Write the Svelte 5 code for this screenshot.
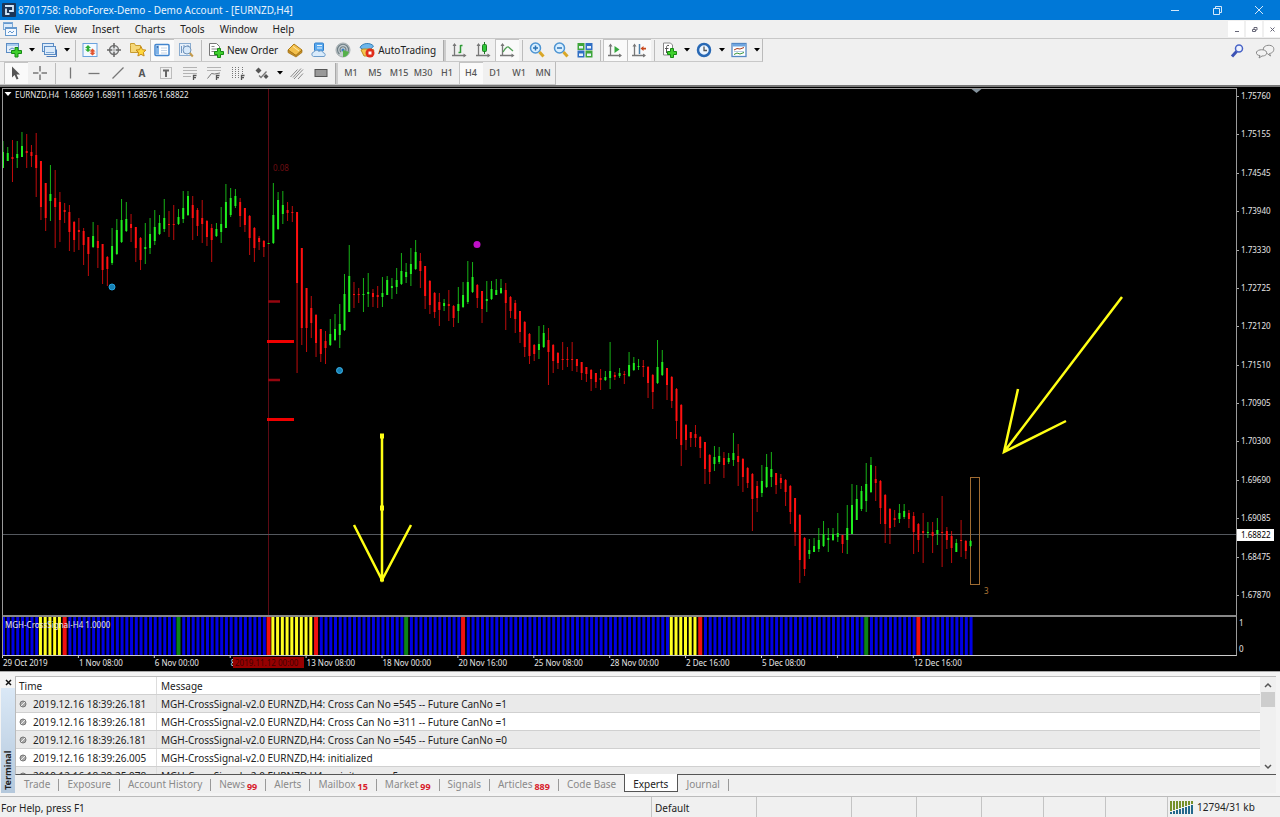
<script>
    const menus = ['File', 'View', 'Insert', 'Charts', 'Tools', 'Window', 'Help'];

    const icons = {
        newChart: '<rect x=".5" y="1.500" width="12" height="9" fill="#e4effa" stroke="#5b8cc4"/><rect x="1" y="2" width="11" height="2" fill="#a9cbee"/><path d="M3 8l3-2 2 1" fill="none" stroke="#5b8cc4"/><path d="M9 5.500h3v3h3.500v3H12v3.500H9v-3.500H5.500v-3H9z" fill="#3fd02c" stroke="#168a14"/>',
        profiles: '<rect x="1.500" y="1.500" width="11" height="8" fill="#dcebfa" stroke="#5b8cc4"/><rect x="3.500" y="4.500" width="11" height="8" fill="#dcebfa" stroke="#5b8cc4"/><path d="M5.500 14.500h10v-7" fill="none" stroke="#4a79b8"/><path d="M5 10.500h8" stroke="#7fa9d8"/>',
        market: '<rect x="1" y="1.500" width="14" height="13" fill="#f3f9ff" stroke="#6aa2de"/><path d="M6 3l3 3H7.200v1.500H9L6 10 3 7.500h1.800V6H3z" fill="#2fae35"/><path d="M10.500 6.500l3 3h-1.800v1.300h1.800l-3 2.700-3-2.700h1.800V9.500H7.500z" fill="#e2532d"/>',
        navigator: '<circle cx="8" cy="8" r="4.500" fill="#e6e8ea" stroke="#777" stroke-width="1.500"/><path d="M8 1v5M8 10v5M1 8h5M10 8h5" stroke="#666" stroke-width="1.500"/><path d="M6 8h4M8 6v4" stroke="#aaa"/>',
        favorites: '<path d="M.5 3.500v-2h4l1 2h5v7H.5z" fill="#f5d778" stroke="#c89c30"/><path d="M11 4.500l1.500 3.200 3.400.4-2.500 2.400.7 3.500-3.100-1.700-3.100 1.700.7-3.500L6 8.100l3.500-.4z" fill="#ffd83c" stroke="#c58a18"/>',
        dataWindow: '<rect x="1" y="2.500" width="14" height="11" rx="1" fill="#fff" stroke="#4386cf" stroke-width="1.500"/><rect x="2" y="3.500" width="3" height="9" fill="#7fb3e8"/><path d="M7 6h6M7 8.500h6M7 11h6" stroke="#c4d4e6"/><circle cx="3.500" cy="5" r=".8" fill="#1e4f93"/>',
        tester: '<rect x="1.500" y="1.500" width="11" height="12" fill="#e6eff9" stroke="#8aacd0"/><path d="M3.500 4v7M6 3v8M10 3v3" stroke="#6f95c2"/><circle cx="9" cy="8" r="4" fill="#d5e8fa" fill-opacity=".9" stroke="#7194ba"/><path d="M11.800 11l3 3.500" stroke="#c49a4a" stroke-width="2"/>',
        newOrder: '<path d="M1.500 1.500h7l3 3v9h-10z" fill="#fff" stroke="#777"/><path d="M3.500 4.500h3M3.500 7h6M3.500 9.500h4" stroke="#888"/><path d="M9.500 6.500h3v3h3v3h-3v3h-3v-3h-3v-3h3z" fill="#3fd02c" stroke="#168a14"/>',
        book: '<path d="M1 8l6-6 8 6-6 5.500z" fill="#f3c04c" stroke="#b07c18"/><path d="M1 8v2.500l8 4.500 6-4.500V8l-6 5.500z" fill="#c98f22" stroke="#9b6d14" stroke-width=".7"/><path d="M6 4.500l6 4.500" stroke="#ffe9a8"/>',
        hosting: '<rect x="3.500" y="1" width="9" height="8" rx="1" fill="#5aa9ee" stroke="#3180cc"/><path d="M6 3.500h5M6 6h5" stroke="#e6f4ff"/><path d="M2.500 14.500a2.300 2.300 0 0 1 .4-4.500 3 3 0 0 1 5-.6 3 3 0 0 1 4.600 1.600 1.800 1.800 0 0 1 .5 3.500z" fill="#d9ebfb" stroke="#6d9cca"/>',
        signals: '<circle cx="8" cy="8" r="7" fill="#c5cdd0" stroke="#a5adb0"/><path d="M4.500 12a5.500 5.500 0 1 1 7 0M6 10a3 3 0 1 1 4 0" fill="none" stroke="#6f7f86" stroke-width="1.200"/><circle cx="8" cy="8" r="1.600" fill="#3b7fc0"/><path d="M8 8v7c3 0 5-2 6-5z" fill="#55b04a"/>',
        auto: '<path d="M1 5.500C3 1 11 0 14.500 4l-3 3.500H4z" fill="#6db7ec" stroke="#377fb8"/><path d="M2 8l2-1h8l3 1-3 6H5z" fill="#f4c64e" stroke="#bd8b1c"/><circle cx="11" cy="11" r="4.500" fill="#e02d1b"/><rect x="9.500" y="9.500" width="3" height="3" fill="#fff"/>',
        bars: '<path d="M3.500 2v12M1 13.500h13" stroke="#777" stroke-width="1.300"/><path d="M3.500 1l2 3h-4zM15.500 13.500l-3-2v4z" fill="#777"/><path d="M9.500 3v8M9.500 3.500h2M7.500 10.500h2" stroke="#2e9a35" stroke-width="1.500"/>',
        candles: '<path d="M3.500 2v12M1 13.500h13" stroke="#777" stroke-width="1.300"/><path d="M3.500 1l2 3h-4zM15.500 13.500l-3-2v4z" fill="#777"/><path d="M9.500 0v12" stroke="#1e7a24"/><rect x="7.500" y="2.500" width="4" height="7" rx="1" fill="#2fc738" stroke="#1e7a24"/>',
        line: '<path d="M3.500 2v12M1 13.500h13" stroke="#777" stroke-width="1.300"/><path d="M3.500 1l2 3h-4zM15.500 13.500l-3-2v4z" fill="#777"/><path d="M4 10c3-5 5-6 6-4.500L14 9" fill="none" stroke="#4f9f54" stroke-width="1.300"/>',
        zoomIn: '<circle cx="6.500" cy="6" r="5" fill="#d9efff" stroke="#4d94d2" stroke-width="1.500"/><path d="M4 6h5M6.500 3.500v5" stroke="#2a72b4" stroke-width="1.500"/><path d="M10.500 10l4 4.500" stroke="#d9a728" stroke-width="3"/>',
        zoomOut: '<circle cx="6.500" cy="6" r="5" fill="#d9efff" stroke="#4d94d2" stroke-width="1.500"/><path d="M4 6h5" stroke="#2a72b4" stroke-width="1.500"/><path d="M10.500 10l4 4.500" stroke="#d9a728" stroke-width="3"/>',
        tile: '<rect x=".5" y="1" width="7" height="7" fill="#3fa53a"/><rect x="8.500" y="1" width="7" height="7" fill="#2f6fc4"/><rect x=".5" y="8.500" width="7" height="7" fill="#2f6fc4"/><rect x="8.500" y="8.500" width="7" height="7" fill="#3fa53a"/><path d="M2 4h4v2.500H2zM10 4h4v2.500h-4zM2 11.500h4V14H2zM10 11.500h4V14h-4z" fill="#e8f2fb"/>',
        autoScroll: '<path d="M3.500 3v11M1 13.500h13" stroke="#777" stroke-width="1.300"/><path d="M3.500 1.500l2 3h-4zM15 13.500l-3-2v4z" fill="#777"/><path d="M7.500 4l5 3.500-5 3.500z" fill="#35a83d"/>',
        shift: '<path d="M3.500 3v11M1 13.500h13" stroke="#777" stroke-width="1.300"/><path d="M3.500 1.500l2 3h-4zM15 13.500l-3-2v4z" fill="#777"/><path d="M8.500 2v10" stroke="#4b7fa8" stroke-width="1.500"/><path d="M9.500 6.500l3-2.500v1.800h2.500v1.600h-2.500V9z" fill="#c8471c"/>',
        indicators: '<path d="M2.500 1h7l2 2v10h-9z" fill="#fff" stroke="#888"/><path d="M8 3.500c-2-.5-2.500.5-2.500 2V11M4 6.500h3.500" fill="none" stroke="#555"/><path d="M9.500 6.500h3v3h3v3h-3v3h-3v-3h-3v-3h3z" fill="#3fd02c" stroke="#168a14"/>',
        periods: '<circle cx="8" cy="8" r="6" fill="#edf6ff" stroke="#2868b4" stroke-width="2.500"/><path d="M8 4.500V8.500h3" fill="none" stroke="#555" stroke-width="1.300"/>',
        templates: '<rect x="1" y="1.500" width="14" height="13" fill="#fff" stroke="#5488c4" stroke-width="1.300"/><rect x="1.500" y="2" width="13" height="2.500" fill="#6fa6e0"/><path d="M3 8l3-1.500 3 .5 4-1.500" fill="none" stroke="#a83a1a"/><path d="M3 9.500h10" stroke="#b8cde4"/><path d="M3 12.500l3-1.500 3 1 4-1.500" fill="none" stroke="#35943a"/>',
        cursor: '<path d="M4 1.500v11l2.600-2.400 2 4.400 1.900-.8-2-4.300H12z" fill="#555"/>',
        cross: '<path d="M8 1v5.500M8 9.500V15M1 8h5.500M9.500 8H15" stroke="#777" stroke-width="1.500"/>',
        vline: '<path d="M8.500 2.500v11" stroke="#777" stroke-width="1.300"/>',
        hline: '<path d="M2.500 8.500h11" stroke="#777" stroke-width="1.300"/>',
        trend: '<path d="M2.500 13.500l11-11" stroke="#777" stroke-width="1.300"/>',
        label: '<rect x="2.500" y="2.500" width="11" height="11" fill="none" stroke="#888" stroke-dasharray="1 1"/><path d="M5 5.500h6M8 5.500V12" stroke="#666" stroke-width="2"/>',
        fibo: '<path d="M1.500 2.500h13M1.500 5.500h13M1.500 8.500h13M1.500 11.500h8" stroke="#777" stroke-dasharray="1 1"/><path d="M11.500 15v-4.500h3M11.500 12.700h2.500" fill="none" stroke="#555" stroke-width="1.300"/>',
        fan: '<path d="M1.500 2.500h13M1.500 5.500h13" stroke="#777" stroke-dasharray="1 1"/><path d="M1.500 13.500l4-5 3 .5 5.500-1" fill="none" stroke="#777"/><path d="M10.500 15v-4.500h3M10.500 12.700h2.500" fill="none" stroke="#555" stroke-width="1.300"/>',
        zones: '<path d="M2.500 2v12M5.500 2v12M8.500 2v12M12.500 2v7" stroke="#777" stroke-dasharray="1 1"/><path d="M11.500 15v-4.500h3M11.500 12.700h2.500" fill="none" stroke="#555" stroke-width="1.300"/>',
        arrows: '<path d="M4.500 2.500L7.500 5.500l-3 3-3-3z" fill="#555"/><path d="M5 10.500l2 2 5.500-6" fill="none" stroke="#777" stroke-width="1.300"/><path d="M12 9l2.500 2.500L12 14l-2.500-2.500z" fill="#555"/>',
        channel: '<path d="M1.500 12l7-7.500M5 14l9-9.500M9 14l5-5.500M4 12.500l8-9" stroke="#888"/>',
        shape: '<rect x="2" y="4.500" width="12" height="7" fill="#999" stroke="#555"/>',
        search: '<circle cx="10" cy="5.500" r="3.500" fill="#eef3ff" stroke="#4863c6" stroke-width="1.500"/><path d="M7.500 8.500l-4.500 5" stroke="#3b52b4" stroke-width="3"/>',
    };

    const mainBar = [
        {icon: 'newChart', name: 'New chart', drop: true}, {icon: 'profiles', name: 'Profiles', drop: true}, {sep: true},
        {icon: 'market', name: 'Market Watch'}, {icon: 'navigator', name: 'Data Window'}, {icon: 'favorites', name: 'Navigator'},
        {icon: 'dataWindow', name: 'Terminal', on: true}, {icon: 'tester', name: 'Strategy Tester'}, {sep: true},
        {icon: 'newOrder', name: 'New Order', text: true}, {icon: 'book', name: 'MetaEditor'}, {icon: 'hosting', name: 'Virtual Hosting'},
        {icon: 'signals', name: 'Signals'}, {icon: 'auto', name: 'AutoTrading', text: true}, {grip: true},
        {icon: 'bars', name: 'Bar Chart'}, {icon: 'candles', name: 'Candlesticks'}, {icon: 'line', name: 'Line Chart', on: true}, {sep: true},
        {icon: 'zoomIn', name: 'Zoom In'}, {icon: 'zoomOut', name: 'Zoom Out'}, {icon: 'tile', name: 'Tile Windows'}, {sep: true},
        {icon: 'autoScroll', name: 'Auto Scroll', on: true}, {icon: 'shift', name: 'Chart Shift', on: true}, {sep: true},
        {icon: 'indicators', name: 'Indicators', drop: true}, {icon: 'periods', name: 'Periods', drop: true}, {icon: 'templates', name: 'Templates', drop: true},
    ];

    const drawBar = [
        {icon: 'cursor', name: 'Cursor', on: true}, {icon: 'cross', name: 'Crosshair'}, {sep: true},
        {icon: 'vline', name: 'Vertical Line'}, {icon: 'hline', name: 'Horizontal Line'}, {icon: 'trend', name: 'Trendline'},
        {letter: 'A', name: 'Text'}, {icon: 'label', name: 'Text Label'}, {icon: 'fibo', name: 'Fibonacci Retracement'},
        {icon: 'fan', name: 'Fibonacci Fan'}, {icon: 'zones', name: 'Fibonacci Time Zones'}, {icon: 'arrows', name: 'Arrows', drop: true},
        {icon: 'channel', name: 'Channel'}, {icon: 'shape', name: 'Rectangle'},
    ];

    const frames = ['M1', 'M5', 'M15', 'M30', 'H1', 'H4', 'D1', 'W1', 'MN'];
    let frame = $state('H4');

    // direction high bodyTop bodyBottom low
    const candles = `g141 152 168 168|g147 153 161 161|r140 157 159 182|g141 154 158 168|g132 146 157 157|r134 151 153 168|r145 152 156 167|r133 155 168 197
|r161 161 207 220|r183 183 218 231|g165 194 201 221|r170 198 207 248|r192 202 220 242|r203 210 212 223|r205 212 232 251|r221 222 240 252
|r218 230 232 250|r228 231 245 265|r237 237 254 276|g222 236 247 248|r225 241 248 268|r244 244 270 284|r256 257 269 286|g228 246 263 265
|g219 230 254 255|g199 220 242 243|g202 219 231 232|r214 224 228 242|r227 227 248 262|r237 238 260 270|g223 247 249 264|g218 234 248 254
|g210 227 241 245|g215 223 234 235|g199 218 229 232|r211 224 225 237|r205 224 225 240|g209 217 224 225|g191 208 219 223|g191 196 215 216
|r196 205 218 240|r208 210 226 236|r200 218 224 243|r220 221 237 246|r224 228 240 262|g223 229 236 237|g207 224 232 243|g184 202 228 228
|g188 198 215 217|g189 196 206 208|r198 202 216 227|r208 208 225 232|r215 216 238 255|r227 228 248 262|r236 238 242 250|r240 241 247 257
|g243 243 244 244|g183 215 243 244|g192 200 229 230|g191 205 214 224|r202 210 213 221|r206 212 213 222|r212 212 283 373|r248 248 328 345
|r288 288 328 352|r296 308 323 338|r314 315 343 357|r329 329 354 362|r331 341 348 364|g319 334 345 346|g314 329 340 341|g304 324 335 348
|g274 294 330 331|g245 276 312 312|r282 294 295 308|r288 294 295 303|g278 294 295 312|g273 292 294 307|r289 293 297 307|r286 295 297 308
|g277 293 297 307|g276 280 295 295|g278 286 288 299|g268 280 287 294|g253 271 284 285|g263 272 277 283|g248 264 274 286|g240 252 269 270
|r253 261 271 288|r266 266 296 309|r280 281 305 314|r292 293 312 318|r293 302 310 326|g299 303 306 311|r290 304 306 321|r305 306 318 327
|g287 304 311 323|g282 295 307 308|g261 282 302 304|g262 277 292 293|r284 285 298 308|r291 291 309 323|g281 299 301 312|g281 289 299 300
|g279 290 295 295|g279 288 293 294|r283 290 303 330|r296 297 311 318|r300 303 319 333|r311 311 332 343|r321 322 347 357|r333 334 356 364
|r344 345 354 361|g326 344 350 359|g325 333 347 348|r328 340 352 385|r344 345 361 373|r352 353 363 369|r342 359 360 370|r347 359 360 367
|r342 359 360 371|r359 359 366 372|r362 362 373 380|r367 367 374 382|r369 370 379 391|r373 373 382 388|r369 378 380 390|g371 377 380 381
|g342 371 378 389|r372 375 377 380|g368 373 376 378|r371 374 375 384|g352 365 376 377|g357 363 370 371|g359 366 367 370|r360 366 367 377
|r366 367 383 398|r374 375 392 409|g340 367 383 384|g350 362 375 376|r368 368 385 400|r376 377 401 408|r388 389 421 439|r404 405 445 466
|r424 425 440 450|r432 432 438 447|r425 434 438 447|r436 437 448 458|r442 442 469 484|r454 455 472 484|g446 457 464 471|g447 456 462 464
|r452 458 465 478|g453 458 462 464|g433 453 460 466|r444 456 462 486|r458 459 477 492|r467 468 483 488|r473 474 499 531|r481 486 498 512
|g465 481 493 497|g454 467 487 488|g452 469 477 487|r473 473 485 494|r474 478 483 489|r479 480 492 506|r485 486 512 524|r498 498 532 546
|r514 515 560 583|r537 538 569 576|g539 550 554 559|g538 546 552 552|g528 540 549 552|g521 534 546 547|g528 538 540 552|g528 534 540 541
|g513 533 537 542|r535 535 544 553|g505 528 540 554|g484 505 534 534|g485 499 520 520|g486 491 509 511|g463 484 501 512|g457 465 492 493
|r466 479 483 501|r480 481 508 524|r494 495 524 543|r508 509 528 544|r510 518 520 527|g504 513 519 523|g504 511 517 519|r510 513 519 528
|r512 516 532 554|r523 524 540 552|r513 531 533 563|g522 532 533 538|r522 532 536 553|g518 530 534 545|r496 532 532 567|r527 531 540 549
|r531 536 548 563|g539 543 552 552|r520 540 541 557|r540 541 551 559|g540 541 546 547`.split('|').map((row, i) => {
        const [high, top, bottom, low] = row.trim().slice(1).split(' ').map(Number);
        return {x: barX(i), up: row[0] === 'g', high, top, bottom: Math.max(bottom, top + 1), low};
    });

    function barX(i) {
        return 3 + i * 4.743;
    }

    const yellowRuns = [[8, 12], [57, 65], [141, 146]];
    const redBars = [13, 56, 66, 97, 147, 193];
    const greenBars = [37, 85, 182];

    function signal(i) {
        if (redBars.includes(i)) return 'red';
        if (greenBars.includes(i)) return 'green';
        if (yellowRuns.some(([from, to]) => i >= from && i <= to)) return 'yellow';
        return 'blue';
    }

    const prices = ['1.75760', '1.75155', '1.74545', '1.73940', '1.73330', '1.72725', '1.72120', '1.71510', '1.70905', '1.70300', '1.69690', '1.69085', '1.68475', '1.67870'];
    const dates = ['29 Oct 2019', '1 Nov 08:00', '6 Nov 00:00', '8', '13 Nov 08:00', '18 Nov 00:00', '20 Nov 16:00', '25 Nov 08:00', '28 Nov 00:00', '2 Dec 16:00', '5 Dec 08:00', '', '12 Dec 16:00'];

    const log = [
        ['2019.12.16 18:39:26.181', 'MGH-CrossSignal-v2.0 EURNZD,H4: Cross Can No =545 -- Future CanNo =1'],
        ['2019.12.16 18:39:26.181', 'MGH-CrossSignal-v2.0 EURNZD,H4: Cross Can No =311 -- Future CanNo =1'],
        ['2019.12.16 18:39:26.181', 'MGH-CrossSignal-v2.0 EURNZD,H4: Cross Can No =545 -- Future CanNo =0'],
        ['2019.12.16 18:39:26.005', 'MGH-CrossSignal-v2.0 EURNZD,H4: initialized'],
        ['2019.12.16 18:39:25.978', 'MGH-CrossSignal-v2.0 EURNZD,H4: uninit reason 5'],
    ];

    const tabs = [
        ['Trade'], ['Exposure'], ['Account History'], ['News', 99], ['Alerts'], ['Mailbox', 15], ['Market', 99],
        ['Signals'], ['Articles', 889], ['Code Base'], ['Experts'], ['Journal'],
    ];
    let tab = $state('Experts');
</script>

{#snippet bar(items)}
    {#each items as item}
        {#if item.sep}
            <span class="sep"></span>
        {:else if item.grip}
            <span class="grip"></span>
        {:else}
            <button class="tool" class:on={item.on} class:wide={item.text} aria-label={item.name}>
                {#if item.letter}
                    <b>{item.letter}</b>
                {:else}
                    <svg width="16" height="16" viewBox="0 0 16 16">{@html icons[item.icon]}</svg>
                {/if}
                {#if item.text}<span>{item.name}</span>{/if}
            </button>
            {#if item.drop}
                <button class="drop" aria-label="{item.name} options">
                    <svg width="6" height="4" viewBox="0 0 6 4"><path d="M0 0h6L3 3.500z" /></svg>
                </button>
            {/if}
        {/if}
    {/each}
{/snippet}

<div class="window">
    <header class="title">
        <svg width="14" height="14" viewBox="0 0 14 14">
            <rect width="14" height="14" rx="1" fill="#1c3557" />
            <path d="M3 3h8v5H7M4 5.500V11h3.500" fill="none" stroke="#e8f1fa" stroke-width="1.800" />
        </svg>
        <span class="caption">8701758: RoboForex-Demo - Demo Account - [EURNZD,H4]</span>
        <button aria-label="Minimize"><svg width="10" height="10"><path d="M1 5.500h8" /></svg></button>
        <button aria-label="Restore"><svg width="10" height="10"><path d="M1.500 3.500h6v6h-6zM3.500 3V1.500h6v6H8" /></svg></button>
        <button aria-label="Close"><svg width="10" height="10"><path d="M1 1l8 8M9 1l-8 8" /></svg></button>
    </header>

    <nav class="menu">
        <svg width="16" height="16" viewBox="0 0 16 16">
            <rect x="1.500" y="1.500" width="9" height="7" fill="#dcebfa" stroke="#7da9d6" />
            <rect x="3.500" y="6.500" width="11" height="8" fill="#f4f9ff" stroke="#6598cd" />
            <path d="M2 2.500h8M4 7.500h10" stroke="#6598cd" />
            <path d="M6 12l2-2 2 2 2-2" fill="none" stroke="#6598cd" />
        </svg>
        {#each menus as menu}
            <button>{menu}</button>
        {/each}
        <div class="child-controls">
            <button aria-label="Minimize chart"><svg width="7" height="7"><path d="M2 5.500h4" /></svg></button>
            <button aria-label="Restore chart"><svg width="7" height="7"><path d="M1.500 3.500h3v2h-3zM3 3V1.500h3V4H5" /></svg></button>
            <button aria-label="Close chart"><svg width="7" height="7"><path d="M1.500 1.500l4 4M5.500 1.500l-4 4" /></svg></button>
        </div>
    </nav>

    <div class="toolbar">
        <div class="strip">{@render bar(mainBar)}</div>
        <div class="right">
            <button class="tool" aria-label="Search"><svg width="16" height="16" viewBox="0 0 16 16">{@html icons.search}</svg></button>
            <button class="tool" aria-label="Chat">
                <svg width="20" height="16" viewBox="0 0 20 16">
                    <path d="M14.500 10.500l1 2.500-3-2.300C8.500 10 8 7.500 8.500 5c1-3 8-4 10-.5 1 3-.5 5.500-4 6z" fill="#f2f2f2" stroke="#888" />
                    <path d="M5 12.500l-1 2.500 3-2c4 0 5-2 4.500-4C10.500 6 3 6 1.500 9c-.5 2 1 3.500 3.500 3.500z" fill="#f2f2f2" stroke="#888" />
                </svg>
            </button>
        </div>
    </div>

    <div class="toolbar">
        <div class="strip drawing">
            {@render bar(drawBar)}
            <span class="grip"></span>
            {#each frames as f}
                <button class="tool frame" class:on={frame === f} onclick={() => frame = f}>{f}</button>
            {/each}
        </div>
    </div>

    <main class="chart">
        <div class="pane price-pane">
            <svg width="100%" height="526">
                <g transform="translate(-3 -89)">
                    <path class="symbol-mark" d="M4.500 92h7l-3.500 4z" />
                    <text x="15" y="98">EURNZD,H4</text>
                    <text x="64" y="98">1.68669 1.68911 1.68576 1.68822</text>
                    <path d="M971.500 89h10l-5 4z" fill="#84929c" />
                    <path d="M268.500 89v526" stroke="#5c0a14" />
                    <path d="M3 534.500h4000" stroke="#54585e" />
                    <rect x="970.500" y="477.500" width="9" height="107" fill="none" stroke="#a06c32" />
                    <text x="984" y="594" class="count">3</text>
                    {#each candles as c}
                        <path class={c.up ? 'up' : 'down'} d="M{c.x} {c.high}V{c.low}" stroke-width="1" opacity=".75" />
                        <path class={c.up ? 'up' : 'down'} d="M{c.x} {c.top}V{c.bottom}" stroke-width="2" />
                    {/each}

                    <text x="273" y="171" class="lot">0.08</text>
                    <path d="M268 301.500h12M268 380h12" stroke="#96060f" stroke-width="2.500" />
                    <path d="M267 341.500h27M267 419.500h27" stroke="#f00000" stroke-width="3" />
                    <circle cx="112" cy="287" r="3" fill="#1681b4" stroke="#26a4e0" />
                    <circle cx="339.500" cy="370.500" r="3" fill="#1681b4" stroke="#3db4ea" />
                    <circle cx="477" cy="244.500" r="3.500" fill="#c010c8" />

                    <g class="arrow">
                        <path d="M1122 297L1004 452M1018 389l-14 63 62-31" />
                        <path d="M382 436v144M354 525l28 55 29-55" />
                        <path d="M380 436h4M380 508h4M380 579h4" stroke-width="5" />
                    </g>
                </g>
            </svg>
        </div>
        <div class="scale">
            {#each prices as price}
                <span>{price}</span>
            {/each}
            <span class="current">1.68822</span>
        </div>

        <div class="pane signal-pane">
            <svg width="100%" height="38">
                <g transform="translate(-3 0)">
                    {#each candles as c, i}
                        <rect class={signal(i)} x={c.x - (signal(i) === 'blue' ? 1 : 2)} width={signal(i) === 'blue' || signal(i) === 'yellow' ? 3 : 4} height="38" />
                    {/each}
                    <text x="5" y="11">MGH-CrossSignal-H4 1.0000</text>
                </g>
            </svg>
        </div>
        <div class="signal-scale"><span>1</span><span>0</span></div>

        <svg class="dates" width="100%" height="15">
            {#each dates as date, i}
                <path d="M{i * 75.900 + .5} 0v2" stroke="#ccc" />
                <text x={i * 75.900 + 1} y="10">{date}</text>
            {/each}
            <rect x="231" y="1" width="71" height="11" fill="#960000" />
            <text x="233" y="10" class="cross-date">2019.11.12 00:00</text>
        </svg>
    </main>

    <section class="terminal">
        <div class="side">
            <button aria-label="Close terminal"><svg width="7" height="7"><path d="M1 1l5 5M6 1L1 6" stroke="#111" stroke-width="1.500" /></svg></button>
            <span>Terminal</span>
        </div>
        <div class="body">
            <div class="journal">
                <div class="rows">
                    <table>
                        <thead>
                            <tr><th class="time">Time</th><th>Message</th></tr>
                        </thead>
                        <tbody>
                            {#each log as [time, message]}
                                <tr>
                                    <td class="time">
                                        <svg width="8" height="8"><circle cx="4" cy="4" r="3" fill="#aaa" stroke="#777" /><path d="M2 6l4-4" stroke="#eee" /></svg>{time}
                                    </td>
                                    <td>{message}</td>
                                </tr>
                            {/each}
                        </tbody>
                    </table>
                </div>
                <div class="scroll">
                    <button aria-label="Scroll up"><svg width="8" height="6"><path d="M1 5l3-3 3 3" /></svg></button>
                    <div class="thumb"></div>
                    <button aria-label="Scroll down"><svg width="8" height="6"><path d="M1 1l3 3 3-3" /></svg></button>
                </div>
            </div>
            <div class="tabs" role="tablist">
                {#each tabs as [name, badge]}
                    <button role="tab" aria-selected={tab === name} class:active={tab === name} onclick={() => tab = name}>
                        {name}{#if badge}<sub>{badge}</sub>{/if}
                    </button>
                {/each}
            </div>
        </div>
    </section>

    <footer class="status">
        <span class="help">For Help, press F1</span>
        <span class="profile">Default</span>
        <span class="w95"></span>
        <span class="w65"></span>
        <span class="w65"></span>
        <span class="w62"></span>
        <span class="w62"></span>
        <span class="w62"></span>
        <span class="traffic">
            <svg width="24" height="13">
                {#each Array(8) as _, i}
                    <path d="M{i * 3 + 1} 0V{10 - i}" stroke="#76902a" stroke-width="2" />
                    <path d="M{i * 3 + 1} {11 - i}V13" stroke="#23688c" stroke-width="2" />
                {/each}
            </svg>
            12794/31 kb
        </span>
    </footer>
</div>

<style>
    :global(body) {
        background: #f0f0f0;
    }

    .window {
        display: flex;
        flex-direction: column;
        min-height: 100vh;
        font: 10px/16px "Noto Sans", "Open Sans", sans-serif;
        color: #222;
    }

    button {
        display: flex;
        align-items: center;
        justify-content: center;
        margin: 0;
        padding: 0;
        border: 0;
        background: none;
        font: inherit;
        color: inherit;
    }

    .title {
        display: flex;
        align-items: center;
        height: 20px;
        padding-left: 2px;
        background: #0078d7;
        color: #e8f3fc;
    }

    .caption {
        flex: 1;
        padding-left: 2px;
    }

    .title button {
        width: 42px;
        height: 20px;
    }

    .title path {
        fill: none;
        stroke: #d4e8fa;
    }

    .menu {
        display: flex;
        align-items: center;
        height: 18px;
        padding-left: 2px;
    }

    .menu > button {
        padding: 0 8px 0 7px;
    }

    .menu > svg {
        margin-right: -1px;
    }

    .child-controls {
        display: flex;
        gap: 2px;
        margin-left: auto;
    }

    .child-controls button {
        width: 16px;
        height: 16px;
        background: #fff;
    }

    .child-controls path {
        fill: none;
        stroke: #667;
    }

    .toolbar {
        display: flex;
        justify-content: space-between;
    }

    .toolbar:nth-of-type(1) {
        border-top: 1px solid #c8c8c8;
    }

    .strip {
        display: flex;
        align-items: center;
        height: 22px;
        padding-left: 2px;
        border-right: 1px solid #bbb;
        border-bottom: 1px solid #c8c8c8;
    }

    .drawing {
        padding-left: 4px;
    }

    .right {
        display: flex;
        align-items: center;
        gap: 4px;
        padding-right: 3px;
    }

    .tool {
        width: 24px;
        height: 22px;
        color: #222;
    }

    .tool svg, .tool span {
        flex: none;
    }

    .tool b {
        color: #555;
    }

    .tool.wide {
        width: auto;
        padding: 0 5px 0 4px;
        gap: 3px;
    }

    .tool.on {
        background: #fafafa;
        box-shadow: inset 1px 1px #c4c4c4;
    }

    .tool.frame {
        font-size: 9px;
        font-weight: 500;
        color: #555;
    }

    .drop {
        width: 11px;
        height: 22px;
    }

    .sep {
        width: 1px;
        height: 21px;
        margin: 0 2px 0 3px;
        background: #bcbcbc;
    }

    .grip {
        width: 2px;
        height: 21px;
        margin: 0 1px 0 2px;
        border-left: 1px solid #aaa;
        background: #ccc;
    }

    .chart {
        display: grid;
        grid-template-columns: 1fr 41px;
        padding: 1px 2px 0;
        border-top: 2px solid #777;
        border-bottom: 1px solid #aaa;
        background: #000;
        font: 8px "Noto Sans", sans-serif;
        color: #e6e6e6;
    }

    .chart svg {
        display: block;
    }

    .chart text {
        fill: #e6e6e6;
    }

    .pane {
        min-width: 0;
        border: 1px solid #9a9a9a;
        border-bottom: 0;
    }

    .signal-pane {
        border-top: 2px solid #888;
        border-bottom: 1px solid #ccc;
    }

    .symbol-mark {
        fill: #fff;
    }

    .up {
        stroke: #1ff01f;
    }

    .down {
        stroke: #ff1010;
    }

    .chart .lot {
        fill: #6e0d12;
    }

    .chart .count {
        fill: #b07838;
    }

    .arrow {
        fill: none;
        stroke: #ffff14;
        stroke-width: 2.5;
    }

    .blue {
        fill: #0000e4;
    }

    .yellow {
        fill: #ffff20;
    }

    .red {
        fill: #f01010;
    }

    .green {
        fill: #0c8418;
    }

    .scale {
        position: relative;
        display: flex;
        flex-direction: column;
        justify-content: space-between;
        padding: 2px 0 14px;
        line-height: 12px;
    }

    .scale span {
        padding-left: 4px;
        background: linear-gradient(#aaa, #aaa) 0 6px / 2px 1px no-repeat;
    }

    .scale .current {
        position: absolute;
        top: 441px;
        left: 0;
        width: 33px;
        background: #fff;
        color: #000;
    }

    .signal-scale {
        display: flex;
        flex-direction: column;
        justify-content: space-between;
        padding: 2px 0 1px 2px;
        line-height: 12px;
    }

    .dates {
        grid-column: 1 / -1;
    }

    .chart .cross-date {
        fill: #420000;
    }

    .terminal {
        display: flex;
        flex: 1;
        padding: 4px 4px 3px 0;
        background: #f4f4f4;
    }

    .side {
        display: flex;
        flex-direction: column;
        width: 14px;
        padding-left: 1px;
    }

    .side button {
        height: 12px;
    }

    .side span {
        flex: 1;
        padding-top: 3px;
        writing-mode: vertical-rl;
        transform: rotate(180deg);
        background: linear-gradient(#b4c8dc, #dae8f6);
        font-weight: 700;
        font-size: 9px;
        line-height: 13px;
    }

    .body {
        display: flex;
        flex: 1;
        flex-direction: column;
        min-width: 0;
    }

    .journal {
        display: flex;
        flex: 1 0 97px;
        height: 97px;
        border-top: 1px solid #bbb;
        border-left: 1px solid #bbb;
        border-bottom: 1px solid #555;
        background: #fff;
    }

    .rows {
        flex: 1;
        overflow: hidden;
    }

    table {
        width: 100%;
        border-collapse: collapse;
    }

    th, td {
        height: 17px;
        padding: 0 4px;
        border-bottom: 1px solid #d0d0d0;
        font-weight: 400;
        line-height: 16px;
        text-align: left;
        white-space: nowrap;
    }

    .time {
        width: 133px;
        padding-left: 3px;
        border-right: 1px solid #ddd;
    }

    td svg {
        margin-right: 6px;
    }

    tbody tr:nth-child(odd) {
        background: #eaeaea;
    }

    .scroll {
        display: flex;
        flex-direction: column;
        width: 16px;
        background: #f0f0f0;
    }

    .scroll button {
        height: 15px;
    }

    .scroll path {
        fill: none;
        stroke: #555;
        stroke-width: 1.5;
    }

    .thumb {
        height: 15px;
        margin: 0 1px auto;
        background: #cdcdcd;
    }

    .tabs {
        display: flex;
        height: 18px;
        padding-left: 1px;
        background: #f0f0f0;
    }

    .tabs button {
        position: relative;
        height: 18px;
        padding: 0 9px 0 8px;
        color: #8a8a8a;
    }

    .tabs button::after {
        content: "";
        position: absolute;
        right: 0;
        top: 4px;
        height: 12px;
        border-right: 1px solid #999;
    }

    .tabs .active {
        margin: -1px 0 0 -1px;
        padding-top: 2px;
        border: 1px solid #555;
        border-top: 0;
        background: #fff;
        color: #222;
    }

    .tabs .active::after {
        content: none;
    }

    sub {
        align-self: flex-end;
        padding-left: 2px;
        color: #d8202c;
        font-size: 9px;
        font-weight: 700;
        line-height: 12px;
    }

    .status {
        display: flex;
        height: 20px;
        border-top: 1px solid #bbb;
        line-height: 22px;
    }

    .status span {
        box-sizing: border-box;
        padding-left: 3px;
        border-left: 1px solid #c4c4c4;
    }

    .status .help {
        flex: 1;
        padding-left: 1px;
        border-left: 0;
    }

    .profile {
        width: 105px;
    }

    .w95 {
        width: 95px;
    }

    .w65 {
        width: 65px;
    }

    .w62 {
        width: 62px;
    }

    .status .traffic {
        display: flex;
        align-items: center;
        gap: 3px;
        width: 113px;
        padding-left: 2px;
    }
</style>
